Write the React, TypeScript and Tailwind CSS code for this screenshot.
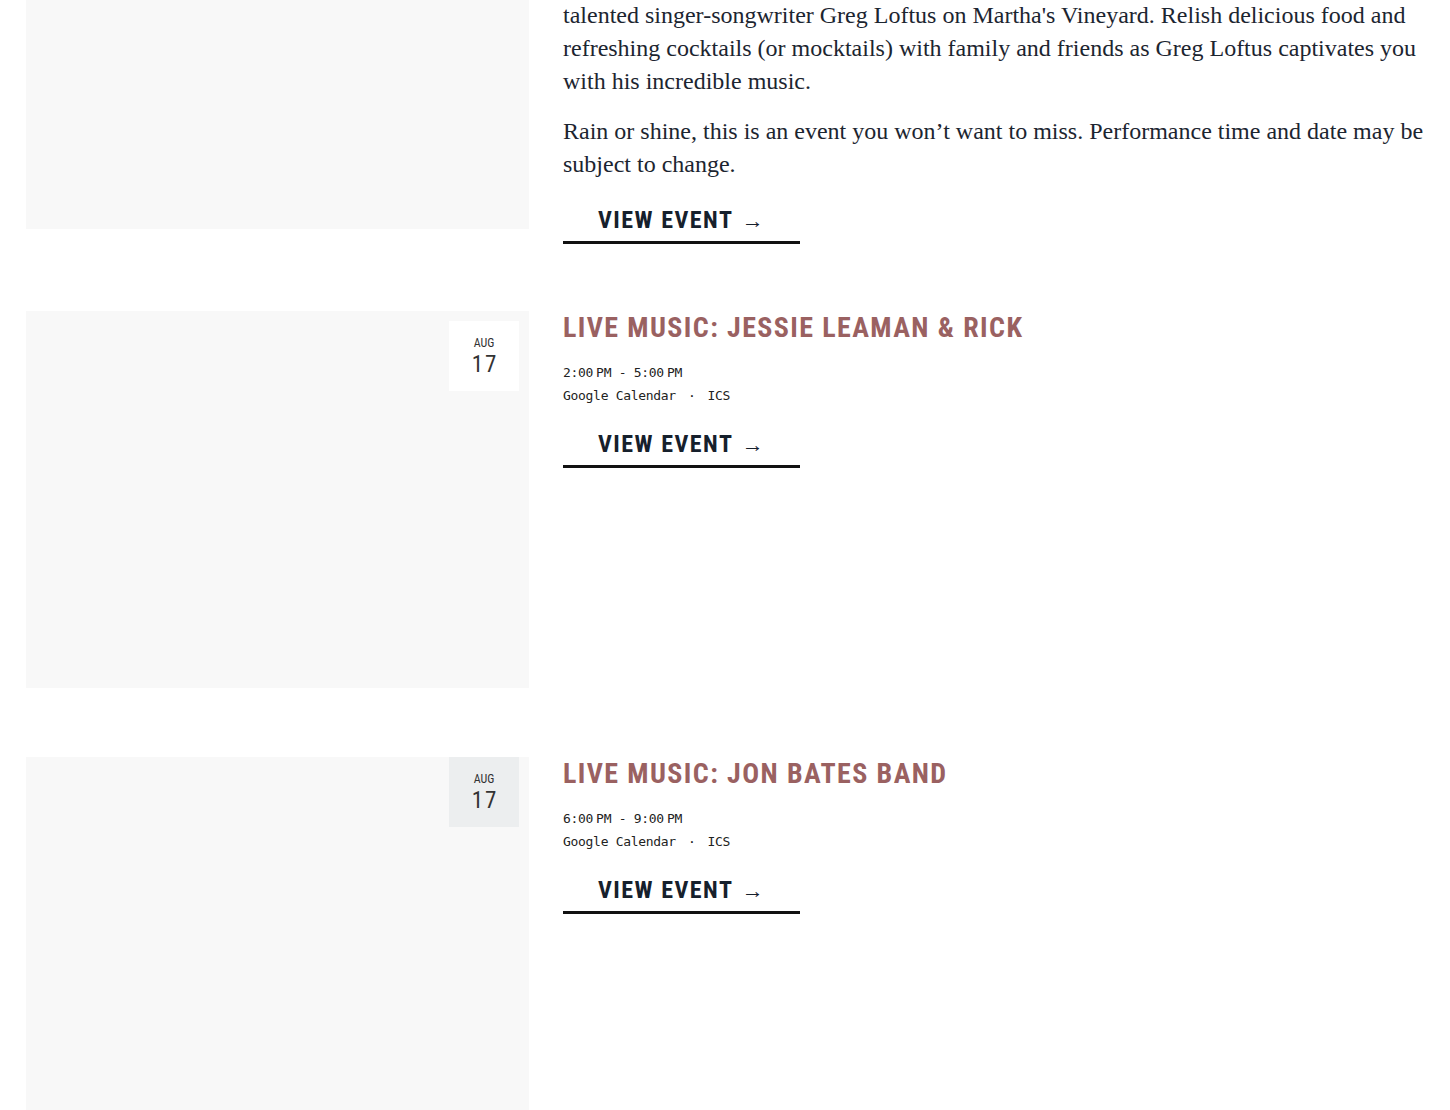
import React from 'react';

const serif = { fontFamily: '"Liberation Serif", "Times New Roman", serif' };

interface DateBadgeProps {
    month: string;
    day: string;
    muted?: boolean;
}

function DateBadge({ month, day, muted }: DateBadgeProps) {
    return (
        <div
            className={`absolute right-[10px] w-[70px] h-[70px] flex flex-col items-center pt-[15px] text-[#333] [font-family:'Roboto_Condensed',Roboto,sans-serif] [font-stretch:75%] ${
                muted ? 'top-0 bg-[#eceeef]' : 'top-[10px] bg-white'
            }`}
        >
            <span className="text-[12px] leading-[14px]">{month}</span>
            <span className="mt-[3px] text-[23px] leading-[24px] tracking-[2px] pl-[2px]">{day}</span>
        </div>
    );
}

function ViewEvent({ className = '' }: { className?: string }) {
    return (
        <a
            href="#"
            className={`block w-[237px] whitespace-nowrap pl-[35px] pt-[8px] pb-[8px] border-b-[3px] border-[#111] text-[24px] leading-[24px] font-bold tracking-[1.5px] text-[#16202c] [font-family:'Roboto_Condensed',Roboto,sans-serif] [font-stretch:75%] ${className}`}
        >
            VIEW EVENT{' '}
            <span className="ml-[2px] font-normal text-[22px] tracking-normal [font-family:'Liberation_Sans',sans-serif]">→</span>
        </a>
    );
}

interface EventRowProps {
    title: string;
    start: string;
    end: string;
    mutedBadge?: boolean;
    className?: string;
}

function EventRow({ title, start, end, mutedBadge, className = '' }: EventRowProps) {
    const [s1, s2] = start.split(' ');
    const [e1, e2] = end.split(' ');
    return (
        <div className={`flex items-start gap-[34px] ${className}`}>
            <div className="relative w-[503px] aspect-[4/3] shrink-0 bg-[#f8f8f8]">
                <DateBadge month="AUG" day="17" muted={mutedBadge} />
            </div>
            <div className="flex-1">
                <h2 className="text-[28px] leading-[1.2] font-bold tracking-[1.4px] text-[#9a6161] [font-family:'Roboto_Condensed',Roboto,sans-serif] [font-stretch:75%]">
                    {title}
                </h2>
                <div className="mt-4 text-[13px] leading-[23px] tracking-[-0.3px] text-[#222] [font-family:'DejaVu_Sans_Mono',monospace]">
                    <div>
                        {s1}
                        <span className="ml-[3px]">{s2}</span> - {e1}
                        <span className="ml-[3px]">{e2}</span>
                    </div>
                    <div>
                        <a href="#">Google Calendar</a>
                        <span className="mx-[12px]">·</span>
                        <a href="#">ICS</a>
                    </div>
                </div>
                <ViewEvent className="mt-[17px]" />
            </div>
        </div>
    );
}

export default function App() {
    return (
        <div className="w-[1450px] h-[1110px] overflow-hidden bg-white pl-[26px] pr-[20px]">
            <div className="flex items-start gap-[34px]">
                <div className="w-[503px] h-[229px] shrink-0 bg-[#f8f8f8]" />
                <div className="flex-1 -mt-[1px] text-[24px] leading-[33px] text-[#1c2530]" style={serif}>
                    <p>
                        talented singer-songwriter Greg Loftus on Martha's Vineyard. Relish delicious food and
                        refreshing cocktails (or mocktails) with family and friends as Greg Loftus captivates you
                        with his incredible music.
                    </p>
                    <p className="mt-[17px]">
                        Rain or shine, this is an event you won’t want to miss. Performance time and date may be
                        subject to change.
                    </p>
                    <ViewEvent className="mt-[19px]" />
                </div>
            </div>

            <EventRow
                className="mt-[67px]"
                title="LIVE MUSIC: JESSIE LEAMAN & RICK"
                start="2:00 PM"
                end="5:00 PM"
            />

            <EventRow
                className="mt-[69px]"
                title="LIVE MUSIC: JON BATES BAND"
                start="6:00 PM"
                end="9:00 PM"
                mutedBadge
            />
        </div>
    );
}
